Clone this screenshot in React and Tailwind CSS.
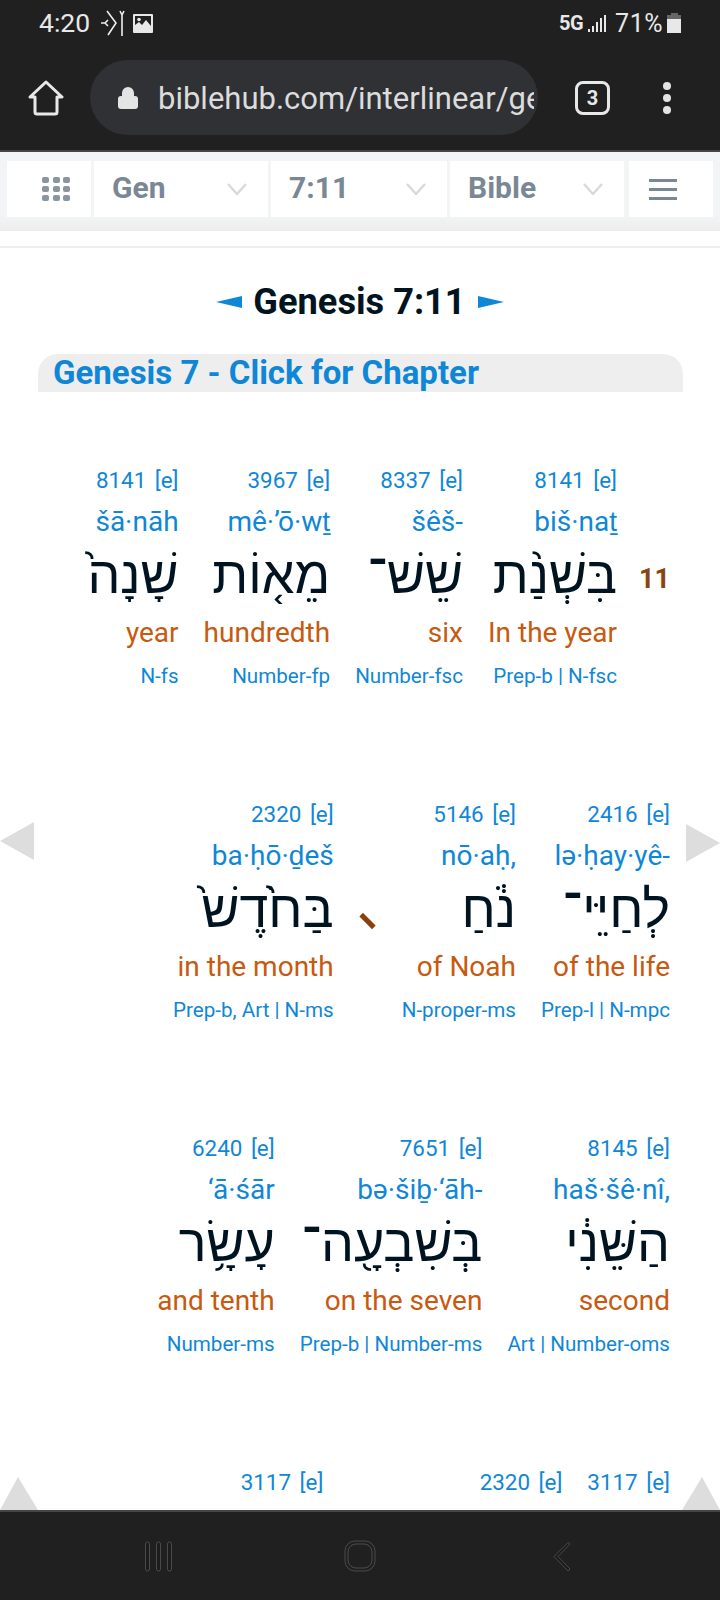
import { Lock } from 'lucide-react'

const rows = [
  {
    verse: '11',
    words: [
      ['8141', 'biš·naṯ', 'בִּשְׁנַ֨ת', 'In the year', 'Prep-b | N-fsc'],
      ['8337', 'šêš-', 'שֵׁשׁ־', 'six', 'Number-fsc'],
      ['3967', 'mê·’ō·wṯ', 'מֵא֤וֹת', 'hundredth', 'Number-fp'],
      ['8141', 'šā·nāh', 'שָׁנָה֙', 'year', 'N-fs'],
    ],
  },
  {
    words: [
      ['2416', 'lə·ḥay·yê-', 'לְחַיֵּי־', 'of the life', 'Prep-l | N-mpc'],
      ['5146', 'nō·aḥ,', 'נֹ֔חַ', 'of Noah', 'N-proper-ms'],
      'mark',
      ['2320', 'ba·ḥō·ḏeš', 'בַּחֹ֙דֶשׁ֙', 'in the month', 'Prep-b, Art | N-ms'],
    ],
  },
  {
    words: [
      ['8145', 'haš·šê·nî,', 'הַשֵּׁנִ֔י', 'second', 'Art | Number-oms'],
      ['7651', 'bə·šiḇ·‘āh-', 'בְּשִׁבְעָ֖ה־', 'on the seven', 'Prep-b | Number-ms'],
      ['6240', '‘ā·śār', 'עָשָׂ֥ר', 'and tenth', 'Number-ms'],
    ],
  },
  {
    words: [
      ['3117', 'yō·wm', 'י֖וֹם', 'day', 'N-ms'],
      ['2320', 'la·ḥō·ḏeš;', 'לַחֹ֑דֶשׁ', 'of the month', 'Prep-l, Art | N-ms', 'w-[214px]'],
      ['3117', 'bay·yō·wm', 'בַּיּ֣וֹם', 'on day', 'Prep-b, Art | N-ms'],
    ],
  },
]

function Word({ strong, translit, hebrew, english, pos, className = '' }) {
  return (
    <div className={`flex flex-col items-end whitespace-nowrap ${className}`}>
      <div className="h-[30px] leading-[30px] text-[22.4px] text-[#0f87d6]">
        {strong} <span className="ml-[3px]">[e]</span>
      </div>
      <div className="mt-[12px] h-[30px] leading-[30px] text-[28px] text-[#0f87d6]">{translit}</div>
      <div
        dir="rtl"
        className="mt-[8px] h-[60px] leading-[60px] text-[52px] text-[#001320] font-['Liberation_Sans',sans-serif]"
      >
        {hebrew}
      </div>
      <div className="mt-[13px] h-[30px] leading-[30px] text-[28px] text-[#c8590f]">{english}</div>
      <div className="mt-[13px] h-[30px] leading-[30px] text-[20.6px] text-[#0f87d6]">{pos}</div>
    </div>
  )
}

function Chevron() {
  return (
    <svg width="20" height="12" viewBox="0 0 20 12" fill="none" stroke="#d5dade" strokeWidth="2.4">
      <path d="M1 1l9 10 9-10" />
    </svg>
  )
}

function Select({ label, className }) {
  return (
    <div className={`flex items-center justify-between bg-white pl-[18px] pr-[21px] ${className}`}>
      <span className="pb-[3px] text-[30px] font-bold text-[#7a8794]">{label}</span>
      <Chevron />
    </div>
  )
}

export default function App() {
  return (
    <div className="w-[720px] h-[1600px] flex flex-col bg-white overflow-hidden relative font-['Roboto',sans-serif]">
      {/* status + browser bar */}
      <div className="h-[152px] bg-[#202020] border-b-2 border-[#454545] shrink-0">
        <div className="h-[46px] flex items-center justify-between pl-[39px] pr-[39px] text-[#e8e8e8]">
          <div className="flex items-center">
            <span className="text-[26.5px] leading-none">4:20</span>
            <svg className="ml-[10px]" width="26" height="32" viewBox="0 0 26 32" fill="none" stroke="#eee" strokeWidth="1.6">
              <path d="M1 16h4l3-3M5 16l3 3M7 4l9 12-8 12" />
              <path d="M20 4l2 4 2-4M22 8v21" />
            </svg>
            <svg className="ml-[7px]" width="20" height="19" viewBox="0 0 20 19">
              <path fill="#e8e8e8" fillRule="evenodd" d="M1 0h18a1 1 0 0 1 1 1v17a1 1 0 0 1-1 1H1a1 1 0 0 1-1-1V1a1 1 0 0 1 1-1zm1 2v9l4-3 3 3 4-5 5 6V2z" />
              <circle cx="6" cy="5.5" r="1.8" fill="#e8e8e8" />
            </svg>
          </div>
          <div className="flex items-center">
            <span className="text-[20px] font-bold leading-none tracking-[-0.5px]">5G</span>
            <svg className="ml-[5px]" width="18" height="19" viewBox="0 0 18 19" fill="#e8e8e8">
              <rect x="0" y="15" width="2" height="3" />
              <rect x="4" y="12" width="2" height="6" />
              <rect x="8" y="8" width="2" height="10" />
              <rect x="12" y="4" width="2" height="14" />
              <rect x="16" y="1" width="2" height="17" />
            </svg>
            <span className="ml-[9px] text-[25px] leading-none tracking-[0.5px]">71%</span>
            <div className="ml-[4px] w-[14px] h-[20px] flex flex-col items-center">
              <div className="w-[7px] h-[2px] bg-[#666]" />
              <div className="w-[14px] h-[4px] bg-[#666]" />
              <div className="w-[14px] h-[14px] bg-[#e8e8e8]" />
            </div>
          </div>
        </div>
        <div className="mt-[14px] flex items-center pl-[28px]">
          <svg width="36" height="36" viewBox="0 0 36 36" fill="none" stroke="#e8e8e8" strokeWidth="3" strokeLinejoin="round">
            <path d="M2 17L18 2l16 15h-5v15a2 2 0 0 1-2 2H9a2 2 0 0 1-2-2V17z" />
          </svg>
          <div className="ml-[26px] w-[448px] h-[75px] rounded-full bg-[#2f3134] flex items-center pl-[26px] overflow-hidden">
            <Lock size={24} className="text-[#e4e4e4] shrink-0" fill="#e4e4e4" strokeWidth={2} />
            <span className="ml-[18px] pt-[3px] w-[376px] overflow-hidden whitespace-nowrap text-[31px] text-[#dcdcdc]">
              biblehub.com/interlinear/ge
            </span>
          </div>
          <div className="ml-[37px] w-[35px] h-[34px] rounded-[8px] border-[3px] border-[#e8e8e8] flex items-center justify-center text-[20px] font-bold text-[#e8e8e8]">
            3
          </div>
          <div className="ml-[53px] flex flex-col gap-[4px]">
            <div className="w-[8px] h-[8px] rounded-full bg-[#e4e4e4]" />
            <div className="w-[8px] h-[8px] rounded-full bg-[#e4e4e4]" />
            <div className="w-[8px] h-[8px] rounded-full bg-[#e4e4e4]" />
          </div>
        </div>
      </div>

      {/* page */}
      <div className="flex-1 overflow-hidden">
        <div className="h-[79px] bg-linear-to-b from-[#f3f4f5] from-80% to-[#ececec] pt-[9px] pl-[7px] flex gap-[3px]">
          <div className="w-[84px] h-[56px] bg-white flex items-center pl-[35px]">
            <div className="grid grid-cols-3 gap-x-[3.5px] gap-y-[3px]">
              {Array.from({ length: 9 }).map((_, i) => (
                <div key={i} className="w-[7px] h-[6px] rounded-[2px] bg-[#8a95a0]" />
              ))}
            </div>
          </div>
          <Select label="Gen" className="w-[174px] h-[56px]" />
          <Select label="7:11" className="w-[176px] h-[56px]" />
          <Select label="Bible" className="w-[174px] h-[56px]" />
          <div className="ml-[2px] w-[84px] h-[56px] bg-white flex flex-col items-start pl-[20px] justify-center gap-[6px]">
            <div className="w-[28px] h-[3px] bg-[#7a8794]" />
            <div className="w-[28px] h-[3px] bg-[#7a8794]" />
            <div className="w-[28px] h-[3px] bg-[#7a8794]" />
          </div>
        </div>
        <div className="mt-[15px] h-[2px] bg-[#eeeeee]" />

        <div className="mt-[36px] h-[36px] flex items-center justify-center">
          <svg width="26" height="12" viewBox="0 0 26 12" fill="#0f87d6">
            <path d="M0 6l26-6v12z" />
          </svg>
          <h1 className="ml-[11px] mr-[6px] text-[36.2px] font-bold text-[#001320] whitespace-nowrap">Genesis 7:11</h1>
          <svg className="ml-[6px]" width="26" height="12" viewBox="0 0 26 12" fill="#0f87d6">
            <path d="M26 6L0 0v12z" />
          </svg>
        </div>

        <div className="mt-[34px] ml-[38px] w-[645px] h-[38px] bg-[#eeeeee] rounded-t-[20px] pl-[15px] leading-[38px] text-[33px] font-bold text-[#0f87d6] whitespace-nowrap">
          Genesis 7 - Click for Chapter
        </div>

        <div className="mt-[73px] flex flex-col gap-[108px]">
          {rows.map((row, i) => (
            <div key={i} className="flex flex-row-reverse gap-[25px] pl-[20px] pr-[50px]">
              {row.verse && (
                <div className="ml-[-3px] mr-[2px] w-[29px] mt-[84px] h-[60px] leading-[60px] text-[27px] font-bold text-[#8b4310]">
                  {row.verse}
                </div>
              )}
              {row.words.map((w, j) =>
                w === 'mark' ? (
                  <div key={j} className="w-[18px] flex justify-center pt-[113px]">
                    <div className="w-[5px] h-[18px] bg-[#8b3f0a] -rotate-45" />
                  </div>
                ) : (
                  <Word key={j} strong={w[0]} translit={w[1]} hebrew={w[2]} english={w[3]} pos={w[4]} className={w[5]} />
                )
              )}
            </div>
          ))}
        </div>
      </div>

      {/* side arrows over the page */}
      <svg className="absolute left-0 top-[822px]" width="34" height="38" viewBox="0 0 34 38" fill="#dddddd">
        <path d="M0 19L34 0v38z" />
      </svg>
      <svg className="absolute right-0 top-[824px]" width="34" height="38" viewBox="0 0 34 38" fill="#dddddd">
        <path d="M34 19L0 0v38z" />
      </svg>
      <svg className="absolute left-0 top-[1477px]" width="38" height="33" viewBox="0 0 38 33" fill="#dddddd">
        <path d="M18 0L38 33H0z" />
      </svg>
      <svg className="absolute right-0 top-[1477px]" width="38" height="33" viewBox="0 0 38 33" fill="#dddddd">
        <path d="M20 0L38 33H0z" />
      </svg>

      {/* android nav */}
      <div className="h-[90px] shrink-0 bg-[#202020] border-t-2 border-[#454545] flex items-start">
        <svg className="ml-[144px] mt-[29px]" width="30" height="31" viewBox="0 0 30 31" fill="#1c1c1c" stroke="#555" strokeWidth="0.8">
          <rect x="1.5" y="1" width="4" height="29" rx="2" />
          <rect x="12.5" y="1" width="4" height="29" rx="2" />
          <rect x="23.5" y="1" width="4" height="29" rx="2" />
        </svg>
        <svg className="ml-[170px] mt-[28px]" width="32" height="32" viewBox="0 0 32 32" fill="none" stroke="#555" strokeWidth="0.8">
          <rect x="1" y="1" width="30" height="30" rx="10" />
          <rect x="4" y="4" width="24" height="24" rx="8" />
        </svg>
        <svg className="ml-[176px] mt-[29px]" width="20" height="31" viewBox="0 0 20 31" fill="#1c1c1c" stroke="#555" strokeWidth="0.8">
          <path d="M16 1.5l2 1.5L6 15.5 18 28l-2 2L2 15.5z" strokeLinejoin="round" />
        </svg>
      </div>
    </div>
  )
}
